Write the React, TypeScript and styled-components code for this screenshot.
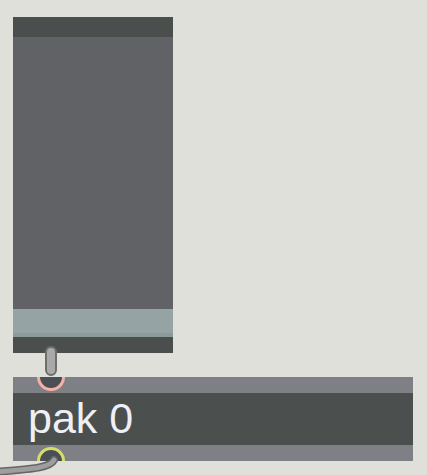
import React from "react";
import styled, { createGlobalStyle } from "styled-components";

const Global = createGlobalStyle`
  html, body { margin: 0; padding: 0; background: #dfe0da; }
  body { width: 427px; height: 475px; overflow: hidden; }
`;

const Patcher = styled.div`
  position: relative;
  width: 427px;
  height: 475px;
  padding: 17px 0 0 13px;
  box-sizing: border-box;
  display: flex;
  flex-direction: column;
`;

const Slider = styled.div`
  width: 160px;
  height: 336px;
  display: flex;
  flex-direction: column;
  background: #616266;
`;

const Band = styled.div<{ $h: number; $c: string }>`
  height: ${(p) => p.$h}px;
  flex: none;
  background: ${(p) => p.$c};
`;

const Track = styled.div`
  flex: 1;
`;

const Knob = styled.div`
  height: 28px;
  flex: none;
  background: #95a3a5;
  border-bottom: 4px solid #8c9b9a;
  box-sizing: border-box;
`;

const CordGap = styled.div`
  height: 24px;
  width: 160px;
  position: relative;
`;

const CordSvg = styled.svg`
  position: absolute;
  left: 0;
  top: 0;
  overflow: visible;
`;

const ObjectBox = styled.div`
  position: relative;
  width: 400px;
  height: 84px;
  display: flex;
  flex-direction: column;
  background: #7f8085;
  overflow: hidden;
`;

const Strip = styled.div`
  height: 16px;
  flex: none;
`;

const Label = styled.div`
  height: 52px;
  flex: none;
  background: #4b4f4e;
  color: #eef0f5;
  font-family: "Liberation Sans", Arial, sans-serif;
  font-size: 43px;
  line-height: 50px;
  padding-left: 15px;
  white-space: nowrap;
`;

const Port = styled.div<{ $ring: string; $bottom?: boolean }>`
  position: absolute;
  left: 24px;
  ${(p) => (p.$bottom ? "bottom: -14px;" : "top: -14px;")}
  width: 28px;
  height: 28px;
  border-radius: 50%;
  box-sizing: border-box;
  border: 3px solid ${(p) => p.$ring};
  background: #4a4e55;
`;

const Overlay = styled.svg`
  position: absolute;
  left: 0;
  top: 0;
  pointer-events: none;
`;

const cord = "M 54 460 C 50 468, 32 469, -6 472";

export default function App() {
  return (
    <>
      <Global />
      <Patcher>
        <Slider>
          <Band $h={20} $c="#4a4f4d" />
          <Track />
          <Knob />
          <Band $h={16} $c="#4a4f4d" />
        </Slider>
        <CordGap>
          <CordSvg width="160" height="24">
            <rect x="33" y="-6" width="10" height="28" rx="5" fill="#a9a9a9" stroke="#6e6e6e" strokeWidth="2" />
          </CordSvg>
        </CordGap>
        <ObjectBox>
          <Strip />
          <Label>pak 0</Label>
          <Strip />
          <Port $ring="#f5b1a2" />
          <Port $ring="#d5dd6c" $bottom />
        </ObjectBox>
        <Overlay width="427" height="475" viewBox="0 0 427 475">
          <path d={cord} fill="none" stroke="#666666" strokeWidth="8" strokeLinecap="round" />
          <path d={cord} fill="none" stroke="#9e9e9e" strokeWidth="5" strokeLinecap="round" />
        </Overlay>
      </Patcher>
    </>
  );
}
